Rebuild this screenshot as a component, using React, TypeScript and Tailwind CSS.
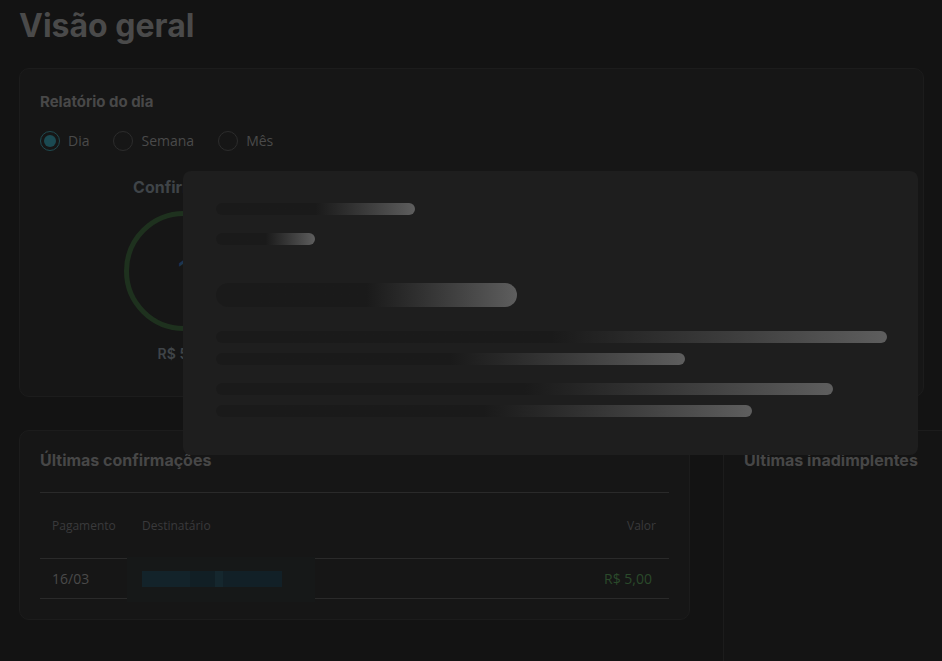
import React from 'react'

const heading = { fontFamily: 'Inter, "Open Sans", sans-serif' }
const body = { fontFamily: '"Open Sans", Inter, sans-serif' }

function Radio({ label, checked }: { label: string; checked?: boolean }) {
  return (
    <label className="flex items-center gap-2 text-[14px] text-[#4a4a4a]" style={body}>
      <span
        className={`flex h-[20px] w-[20px] items-center justify-center rounded-full border ${
          checked ? 'border-[#1f4a50]' : 'border-[#2c2c2c]'
        }`}
      >
        {checked && <span className="h-[12px] w-[12px] rounded-full bg-[#1b4a52]" />}
      </span>
      {label}
    </label>
  )
}

function Skeleton({ width, height, className }: { width: number; height: number; className?: string }) {
  return (
    <div
      className={`rounded-full bg-gradient-to-r from-[#1a1a1a] from-50% to-[#5e5e5e] ${className ?? ''}`}
      style={{ width, height }}
    />
  )
}

function StatusRing({ title, count, amount }: { title: string; count: number; amount: string }) {
  return (
    <div className="flex w-[120px] flex-col items-center">
      <p className="text-[16px] font-bold leading-[24px] text-[#3f4448] whitespace-nowrap" style={heading}>
        {title}
      </p>
      <div className="mt-[12px] flex h-[120px] w-[120px] items-center justify-center rounded-full border-[5px] border-[#1e311e]">
        <span className="text-[28px] font-semibold text-[#1c3550]" style={heading}>
          {count}
        </span>
      </div>
      <p className="mt-[13px] text-[14px] font-semibold leading-[20px] text-[#3f4448]" style={heading}>
        {amount}
      </p>
    </div>
  )
}

export default function App() {
  return (
    <div className="relative h-[661px] w-[942px] overflow-hidden bg-[#131313] pl-[19px]">
      <h1 className="pt-[6px] text-[32px] font-bold leading-[40px] text-[#4a4a4a]" style={heading}>
        Visão geral
      </h1>

      <section className="mt-[22px] h-[329px] w-[905px] rounded-[10px] border border-[#1c1c1c] bg-[#161616] px-5 pt-[22px]">
        <h2 className="text-[15px] font-bold leading-[22px] text-[#484848]" style={heading}>
          Relatório do dia
        </h2>
        <div className="mt-[17px] flex items-center gap-[24px]">
          <Radio label="Dia" checked />
          <Radio label="Semana" />
          <Radio label="Mês" />
        </div>
        <div className="mt-[24px] flex gap-[80px] pl-[84px]">
          <StatusRing title="Confirmados" count={1} amount="R$ 5,00" />
          <StatusRing title="Pendentes" count={0} amount="R$ 0,00" />
          <StatusRing title="Inadimplentes" count={0} amount="R$ 0,00" />
        </div>
      </section>

      <div className="mt-[33px] flex items-start gap-[33px]">
        <section className="w-[671px] shrink-0 rounded-[10px] border border-[#1c1c1c] bg-[#161616] px-5 pt-[17px] pb-5">
          <h2 className="text-[16px] font-bold leading-[24px] text-[#474747]" style={heading}>
            Últimas confirmações
          </h2>
          <table className="mt-[20px] w-full border-t border-[#2a2a2a] text-left" style={body}>
            <thead>
              <tr className="h-[66px] border-b border-[#2a2a2a] text-[12px] text-[#3a3a3c]">
                <th className="w-[90px] px-3 font-normal">Pagamento</th>
                <th className="px-3 font-normal">Destinatário</th>
                <th className="px-3 pr-[13px] text-right font-normal">Valor</th>
              </tr>
            </thead>
            <tbody>
              <tr className="h-[40px] border-b border-[#2a2a2a] text-[14px]">
                <td className="px-3 text-[#4a4a4a]">16/03</td>
                <td className="relative px-3">
                  <div className="absolute left-[-3px] top-[-2px] h-[45px] w-[188px] bg-[#161818]" />
                  <div className="relative flex h-[16px] w-[140px] bg-[#122027]">
                    <span className="h-full w-[48px] bg-[#13232a]" />
                    <span className="h-full w-[25px] bg-[#111f25]" />
                    <span className="h-full w-[8px] bg-[#15272e]" />
                  </div>
                </td>
                <td className="px-3 pr-[17px] text-right text-[#2b4a2b]">R$ 5,00</td>
              </tr>
            </tbody>
          </table>
        </section>

        <section className="h-[300px] w-[260px] shrink-0 rounded-[10px] border border-[#1c1c1c] bg-[#141414] px-5 pt-[17px]">
          <h2 className="whitespace-nowrap text-[16px] font-bold leading-[24px] text-[#474747]" style={heading}>
            Ultimas inadimplentes
          </h2>
        </section>
      </div>

      <div className="absolute left-[183px] top-[171px] h-[284px] w-[735px] rounded-lg bg-[#1e1e1e] pl-[33px] pt-[32px]">
        <Skeleton width={199} height={12} />
        <Skeleton width={99} height={12} className="mt-[18px]" />
        <Skeleton width={301} height={24} className="mt-[38px]" />
        <Skeleton width={671} height={12} className="mt-[24px]" />
        <Skeleton width={469} height={12} className="mt-[10px]" />
        <Skeleton width={617} height={12} className="mt-[18px]" />
        <Skeleton width={536} height={12} className="mt-[10px]" />
      </div>
    </div>
  )
}
